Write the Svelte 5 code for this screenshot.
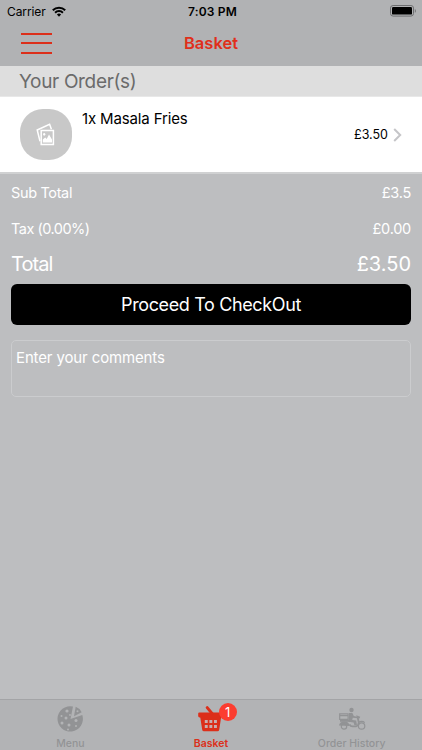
<script>
    const order = {
        qty: 1,
        name: 'Masala Fries',
        price: '£3.50'
    };

    const totals = [
        { label: 'Sub Total', value: '£3.5' },
        { label: 'Tax (0.00%)', value: '£0.00' }
    ];

    let comments = '';
</script>

<div class="screen">
    <header>
        <div class="status">
            <div class="carrier">
                <span>Carrier</span>
                <svg width="14" height="11" viewBox="0 0 14 11" fill="none" stroke="#000" stroke-width="2">
                    <path d="M.8 4.2a8.8 8.8 0 0 1 12.4 0" />
                    <path d="M3.1 6.7a5.5 5.5 0 0 1 7.8 0" />
                    <path d="M7 10.7 4.9 8.5a3 3 0 0 1 4.2 0Z" fill="#000" stroke="none" />
                </svg>
            </div>
            <span class="time">7:03 PM</span>
            <svg class="battery" width="26" height="12" viewBox="0 0 26 12">
                <rect x=".5" y=".5" width="23" height="10.6" rx="2.6" fill="none" stroke="#6d6e70" />
                <rect x="2" y="2" width="20" height="7.6" rx="1.2" />
                <path d="M24.8 4v3.8q1.2-.6 1.2-1.9t-1.2-1.9" fill="#77787a" />
            </svg>
        </div>
        <div class="nav">
            <button class="burger" aria-label="Open menu"><i></i><i></i><i></i></button>
            <h1>Basket</h1>
        </div>
    </header>

    <h2>Your Order(s)</h2>

    <div class="item">
        <div class="thumb">
            <svg width="20" height="23" viewBox="0 0 20 23" fill="none" stroke="#fff" stroke-width="1.5">
                <path d="M4 18.3 1.2 7 13.6 1.3l1.8 5" />
                <path d="M5.2 7.5h12.2v14H5.2z" />
                <path d="M6.8 19.5v-3l2.4-2 1.5 1.4 2.3-4.3 3 5v2.9z" fill="#fff" stroke="none" />
                <ellipse cx="8.2" cy="11.3" rx="1.1" ry="1.4" fill="#fff" stroke="none" />
            </svg>
        </div>
        <div class="name">{order.qty}x {order.name}</div>
        <div class="price">{order.price}</div>
        <svg class="chevron" width="9" height="14" viewBox="0 0 9 14" fill="none" stroke="#c5c5c8" stroke-width="2">
            <path d="m1.2 1 6 6-6 6" />
        </svg>
    </div>

    <main>
        {#each totals as row}
            <div class="row"><span class="label">{row.label}</span><span class="value">{row.value}</span></div>
        {/each}
        <div class="row total"><span class="label">Total</span><span>{order.price}</span></div>
        <button class="checkout">Proceed To CheckOut</button>
        <textarea bind:value={comments} placeholder="Enter your comments"></textarea>
    </main>

    <nav class="tabs">
        <div class="tab">
            <svg width="28" height="28" viewBox="0 0 28 28">
                <path d="M14.5 14 17 1.5A12.7 12.7 0 1 0 26.3 10Z" fill="#929395" />
                <path d="m18 11.2 1.7-9.4q4 1.4 6 5.4Z" fill="#929395" />
                <g fill="#b3b4b6">
                    <circle cx="11" cy="6" r="1.6" />
                    <circle cx="5.5" cy="11" r="1" />
                    <circle cx="10" cy="13" r="1.5" />
                    <circle cx="6" cy="18" r="1.5" />
                    <circle cx="13" cy="20" r="1.5" />
                    <circle cx="20" cy="15.5" r="1.5" />
                    <circle cx="20" cy="21" r="1" />
                    <circle cx="12" cy="24.5" r="1" />
                    <circle cx="21.5" cy="6.2" r="1" />
                    <circle cx="14" cy="10" r=".9" />
                </g>
            </svg>
            <span>Menu</span>
        </div>
        <div class="tab active">
            <svg width="26" height="28" viewBox="0 0 26 28" fill="#dc2f1a">
                <path d="M1.2 7.6h23.6v3.4q0 1.4-1.4 1.4H1.6q-1.4 0-1.4-1.4V8.6q0-1 1-1" />
                <path d="M2.2 12h21l-2 12.7q-.2 1.5-1.8 1.5H6q-1.6 0-1.8-1.5Z" />
                <path d="m9.2 2.6 5 6" stroke="#dc2f1a" stroke-width="3" stroke-linecap="round" />
                <path d="M6.8 15h2.9v3H6.8zm4.6 0h2.9v3h-2.9zm4.6 0h2.9v3H16zM6.8 20h2.9v3H6.8zm4.6 0h2.9v3h-2.9zm4.6 0h2.9v3H16z" fill="#c9aeae" />
            </svg>
            <b class="badge">{order.qty}</b>
            <span>Basket</span>
        </div>
        <div class="tab">
            <svg width="28" height="28" viewBox="0 0 28 28" fill="none" stroke="#929395" stroke-width="1.2">
                <circle cx="13.5" cy="5" r="2.2" fill="#929395" stroke="none" />
                <path d="M11 8h3.4l1.4 3 4.2.9v1.3l-5.2-.5-.6 2.3 4 .5.8 4.7h-2.6l-.8-2.8-5-.6Z" fill="#929395" stroke="none" />
                <path d="M1.7 8.9h8.4v5.4H1.7zM1.7 10.7h8.4" />
                <path d="M2 15.9h10" stroke-width="1.8" />
                <path d="M11.5 19.3q1 2 3 2h3.5q2.4-.4 2.8-3.8l-1.3-5.8 2.4 1" stroke-width="1.8" />
                <path d="M1 20.6q.6-4 5.3-4 4.6 0 5.4 4.4Z" fill="#929395" stroke="none" />
                <circle cx="6" cy="21.5" r="2.7" />
                <circle cx="23.6" cy="21" r="3.2" />
                <path d="M20.3 17.2q4-2 6.4.4" />
            </svg>
            <span>Order History</span>
        </div>
    </nav>
</div>

<style>
    :global(body) {
        margin: 0;
    }
    .screen {
        display: flex;
        flex-direction: column;
        width: 422px;
        height: 750px;
        overflow: hidden;
        background: #bdbec0;
        font-family: Inter, "Liberation Sans", sans-serif;
        color: #000;
    }
    h1, h2 {
        margin: 0;
    }
    button {
        border: 0;
        padding: 0;
        font-family: inherit;
    }
    header {
        height: 66px;
        background: #b1b2b4;
    }
    .status {
        display: grid;
        grid-template-columns: 1fr auto 1fr;
        align-items: center;
        height: 22px;
        padding: 0 5px 0 7px;
        font-size: 12px;
    }
    .carrier {
        display: flex;
        align-items: center;
        gap: 6px;
        letter-spacing: -0.1px;
    }
    .time {
        padding-left: 1px;
        font-weight: 600;
        letter-spacing: 0.15px;
    }
    .battery {
        justify-self: end;
        margin-right: 1px;
    }
    .nav {
        display: grid;
        grid-template-columns: 1fr auto 1fr;
        align-items: center;
        height: 42px;
        padding: 0 21px;
    }
    .burger {
        display: flex;
        flex-direction: column;
        gap: 7.5px;
        width: 31px;
        background: none;
    }
    .burger i {
        height: 2px;
        background: #dc2f1a;
    }
    h1 {
        color: #e02f1b;
        font-size: 16.5px;
        font-weight: 600;
    }
    h2 {
        height: 30px;
        padding-left: 19px;
        background: #dedede;
        border-bottom: 1px solid #e8e8e8;
        color: #6b6b6b;
        font-size: 19px;
        font-weight: 400;
        letter-spacing: -0.33px;
        line-height: 31px;
    }
    .item {
        display: flex;
        align-items: center;
        height: 75px;
        padding: 0 20px 0 20px;
        background: #fff;
        border-bottom: 2px solid #d0d1d2;
    }
    .thumb {
        display: flex;
        align-items: center;
        justify-content: center;
        width: 52px;
        height: 51px;
        border-radius: 23px;
        background: #c8c8c8;
    }
    .name {
        flex: 1;
        align-self: flex-start;
        margin: 12px 0 0 10px;
        font-size: 15px;
        letter-spacing: -0.14px;
        line-height: 20px;
    }
    .price {
        font-size: 12.5px;
    }
    .chevron {
        margin-left: 5px;
    }
    main {
        flex: 1;
        padding: 0 11px;
        color: #fff;
    }
    .row {
        display: flex;
        justify-content: space-between;
        align-items: center;
        height: 36px;
        font-size: 14.5px;
    }
    .label {
        letter-spacing: -0.5px;
    }
    .row:first-child .label {
        letter-spacing: -0.35px;
    }
    .value {
        letter-spacing: -0.25px;
    }
    .total {
        font-size: 20px;
    }
    .total .label {
        letter-spacing: -0.9px;
    }
    .checkout {
        display: block;
        width: 100%;
        height: 41px;
        margin-top: 2px;
        border-radius: 6px;
        background: #000;
        color: #fff;
        font-size: 18px;
        letter-spacing: -0.37px;
    }
    textarea {
        display: block;
        box-sizing: border-box;
        width: 100%;
        height: 57px;
        margin-top: 15px;
        padding: 7px 4px;
        border: 1px solid #cbccce;
        border-radius: 5px;
        background: none;
        color: #fff;
        font: 15px/20px Inter, "Liberation Sans", sans-serif;
        letter-spacing: -0.13px;
        resize: none;
    }
    textarea::placeholder {
        color: #fff;
    }
    .tabs {
        display: grid;
        grid-template-columns: repeat(3, 1fr);
        height: 50px;
        border-top: 1px solid #a3a4a6;
        background: #b2b3b5;
    }
    .tab {
        position: relative;
        display: flex;
        flex-direction: column;
        align-items: center;
        padding-top: 5px;
        color: #929395;
        font-size: 10.5px;
        font-weight: 500;
        line-height: 21px;
    }
    .active {
        color: #dc2f1a;
        font-weight: 600;
    }
    .badge {
        position: absolute;
        top: 3px;
        left: 78px;
        width: 18px;
        height: 18px;
        border-radius: 50%;
        background: #fc3d30;
        color: #fff;
        font-size: 13px;
        font-weight: 400;
        line-height: 18px;
        text-align: center;
    }
</style>
